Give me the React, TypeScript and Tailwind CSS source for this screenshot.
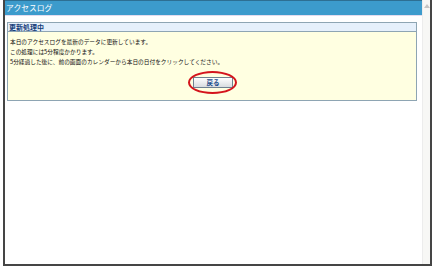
import React from "react";

export default function App() {
  const jp = { fontFamily: '"MS PGothic","Noto Sans CJK JP","Noto Sans",sans-serif' };
  return (
    <div className="w-[436px] h-[271px] bg-white overflow-hidden" style={jp}>
      <div className="ml-[3px] w-[429px] h-[266px] border-l-2 border-r-2 border-b-2 border-[#454545] flex flex-row">
        <div className="flex-1 flex flex-col">
          <div className="h-[15px] bg-[#3c9bcc] border-t border-[#2d6f93] flex items-center pl-[1px]">
            <span className="text-[7.8px] leading-none text-white">アクセスログ</span>
          </div>
          <div className="h-[1px] bg-[#e2dcef]" />
          <div className="mt-[6px] ml-[2px] mr-[5px] border border-[#8ea5b3]">
            <div className="h-[9px] bg-[#e6f0fb] border-b border-[#8ea5b3] flex items-center pl-[1px]">
              <span className="text-[7px] leading-none font-bold text-[#17407a]">更新処理中</span>
            </div>
            <div className="bg-[#ffffe1] pt-[5px] pl-[2px] pb-[12px]">
              <div className="text-[5.7px] leading-[10px] text-[#111]">
                <div>本日のアクセスログを最新のデータに更新しています。</div>
                <div>この処理には5分程度かかります。</div>
                <div>5分経過した後に、前の画面のカレンダーから本日の日付をクリックしてください。</div>
              </div>
              <div className="mt-[10px] flex justify-center">
                <div className="relative">
                  <div className="w-[40px] h-[11px] border border-[#6f8191] bg-gradient-to-b from-[#ffffff] to-[#d8dce0] flex items-center justify-center">
                    <span className="text-[6.5px] leading-none font-bold text-[#1c4d8a]">戻る</span>
                  </div>
                  <div className="absolute left-[-5px] top-[-6px] w-[49px] h-[23px] rounded-[50%] border-2 border-[#d4141c]" />
                </div>
              </div>
            </div>
          </div>
        </div>
        <div className="w-[8px] bg-[#f7f7f5] border-l border-[#ececec] flex flex-col items-center pt-[4px]">
          <svg width="6" height="4" viewBox="0 0 6 4">
            <path d="M0 4 L3 0 L6 4 Z" fill="#c4c4c4" />
          </svg>
        </div>
      </div>
    </div>
  );
}
